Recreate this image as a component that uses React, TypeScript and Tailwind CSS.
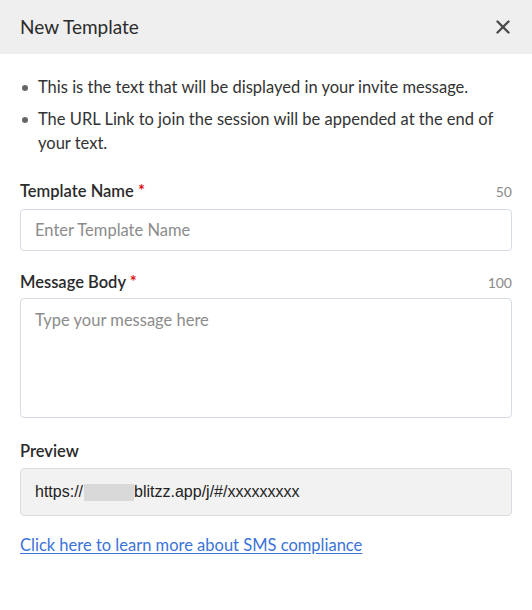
import { X } from 'lucide-react';

const bullets = [
  'This is the text that will be displayed in your invite message.',
  'The URL Link to join the session will be appended at the end of your text.',
];

export default function App() {
  return (
    <div className="w-[532px] h-[610px] bg-white text-[#2b2b2b] font-['Lato','Noto_Sans',sans-serif]">
      {/* Header */}
      <div className="h-[54px] bg-[#efefef] flex items-center justify-between pl-5 pr-[18px]">
        <h2 className="text-[19px] text-[#2b2b2b]">New Template</h2>
        <X className="w-[22px] h-[22px] text-[#4a4a4a]" strokeWidth={2.6} />
      </div>

      <div className="px-5 pt-[21px]">
        <ul className="space-y-2 text-[16.5px] leading-6 text-[#333]">
          {bullets.map((b) => (
            <li key={b} className="flex gap-[10px]">
              <span className="mt-[10px] w-[6px] h-[6px] rounded-full bg-[#666] shrink-0 ml-[2px]"></span>
              <span>{b}</span>
            </li>
          ))}
        </ul>

        {/* Template name */}
        <div className="mt-[24px]">
          <div className="flex justify-between items-baseline leading-6">
            <label className="text-[16.5px] font-semibold text-[#2b2b2b]">
              Template Name <span className="text-[#e01010]">*</span>
            </label>
            <span className="text-[14px] text-[#8a8a8a]">50</span>
          </div>
          <input
            placeholder="Enter Template Name"
            className="mt-[5px] block w-full h-[42px] border border-[#d6dce4] rounded-[4px] px-[14px] text-[16.5px] placeholder:text-[#8c8c8c] outline-none"
          />
        </div>

        {/* Message body */}
        <div className="mt-[19px]">
          <div className="flex justify-between items-baseline leading-6">
            <label className="text-[16.5px] font-semibold text-[#2b2b2b]">
              Message Body <span className="text-[#e01010]">*</span>
            </label>
            <span className="text-[14px] text-[#8a8a8a]">100</span>
          </div>
          <textarea
            placeholder="Type your message here"
            className="mt-[3px] block w-full h-[120px] border border-[#d6dce4] rounded-[4px] px-[14px] py-[9px] text-[16.5px] placeholder:text-[#8c8c8c] outline-none resize-none"
          />
        </div>

        {/* Preview */}
        <div className="mt-[21px]">
          <div className="text-[16.5px] leading-6 font-semibold text-[#2b2b2b]">Preview</div>
          <div className="mt-[5px] h-[48px] bg-[#f2f2f2] border border-[#d9dde3] rounded-[4px] px-[14px] flex items-center text-[16px] text-[#222] font-['Liberation_Sans',Arial,sans-serif]">
            https://
            <span className="inline-block w-[50px] h-[17px] bg-[#d9d9d9] ml-[1px]"></span>
            blitzz.app/j/#/xxxxxxxxx
          </div>
        </div>

        <a href="#" className="mt-[17px] inline-block text-[16.5px] leading-6 text-[#3b73d9] underline underline-offset-2">
          Click here to learn more about SMS compliance
        </a>
      </div>
    </div>
  );
}
